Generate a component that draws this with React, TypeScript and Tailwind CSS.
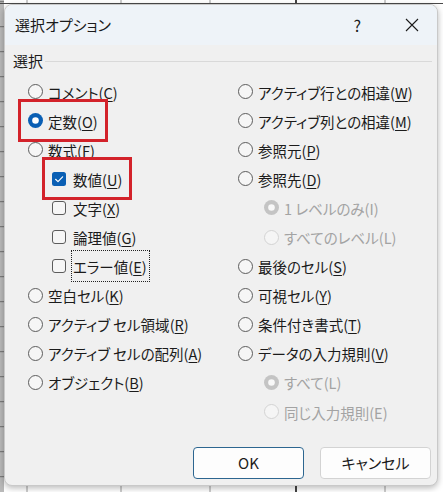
import React from "react";

const font = "font-['Noto_Sans_CJK_JP','Noto_Sans',sans-serif] [font-feature-settings:'palt']";

function Radio({ checked = false, disabled = false }: { checked?: boolean; disabled?: boolean }) {
  if (checked && !disabled) {
    return (
      <svg width="15" height="15" viewBox="0 0 15 15" className="shrink-0">
        <circle cx="7.5" cy="7.5" r="7.5" fill="#0a5fb4" />
        <circle cx="7.5" cy="7.5" r="3.3" fill="#ffffff" />
      </svg>
    );
  }
  if (checked && disabled) {
    return (
      <svg width="15" height="15" viewBox="0 0 15 15" className="shrink-0">
        <circle cx="7.5" cy="7.5" r="7.5" fill="#c4c4c4" />
        <circle cx="7.5" cy="7.5" r="3.3" fill="#f8f8f8" />
      </svg>
    );
  }
  return (
    <svg width="15" height="15" viewBox="0 0 15 15" className="shrink-0">
      <circle
        cx="7.5"
        cy="7.5"
        r="7"
        fill={disabled ? "#f5f5f5" : "#f6f6f6"}
        stroke={disabled ? "#d2d2d2" : "#5c5c5c"}
        strokeWidth="1"
      />
    </svg>
  );
}

function Check({ checked = false }: { checked?: boolean }) {
  if (checked) {
    return (
      <svg width="14" height="14" viewBox="0 0 14 14" className="shrink-0">
        <rect x="0" y="0" width="14" height="14" rx="2.5" fill="#0a5fb4" />
        <path d="M3.6 7.3 L6 9.6 L10.6 4.8" fill="none" stroke="#ffffff" strokeWidth="1.2" strokeLinecap="round" strokeLinejoin="round" />
      </svg>
    );
  }
  return (
    <svg width="14" height="14" viewBox="0 0 14 14" className="shrink-0">
      <rect x="0.5" y="0.5" width="13" height="13" rx="2.5" fill="#f6f6f6" stroke="#5c5c5c" strokeWidth="1" />
    </svg>
  );
}

function Label({ text, k, disabled }: { text: string; k: string; disabled?: boolean }) {
  return (
    <span className={`text-[14.5px] leading-none whitespace-nowrap ${disabled ? "text-[#a3a3a3]" : "text-[#1b1b1b]"}`}>
      {text}(<span className={disabled ? "" : "underline underline-offset-[2px] decoration-1"}>{k}</span>)
    </span>
  );
}

type Item = {
  kind: "radio" | "check";
  text: string;
  k: string;
  indent: number;
  checked?: boolean;
  disabled?: boolean;
  box?: boolean;
  focus?: boolean;
};

const left: Item[] = [
  { kind: "radio", text: "コメント", k: "C", indent: 0 },
  { kind: "radio", text: "定数", k: "O", indent: 0, checked: true, box: true },
  { kind: "radio", text: "数式", k: "F", indent: 0 },
  { kind: "check", text: "数値", k: "U", indent: 24, checked: true, box: true },
  { kind: "check", text: "文字", k: "X", indent: 24 },
  { kind: "check", text: "論理値", k: "G", indent: 24 },
  { kind: "check", text: "エラー値", k: "E", indent: 24, focus: true },
  { kind: "radio", text: "空白セル", k: "K", indent: 0 },
  { kind: "radio", text: "アクティブ セル領域", k: "R", indent: 0 },
  { kind: "radio", text: "アクティブ セルの配列", k: "A", indent: 0 },
  { kind: "radio", text: "オブジェクト", k: "B", indent: 0 },
];

const right: Item[] = [
  { kind: "radio", text: "アクティブ行との相違", k: "W", indent: 0 },
  { kind: "radio", text: "アクティブ列との相違", k: "M", indent: 0 },
  { kind: "radio", text: "参照元", k: "P", indent: 0 },
  { kind: "radio", text: "参照先", k: "D", indent: 0 },
  { kind: "radio", text: "1 レベルのみ", k: "I", indent: 26, checked: true, disabled: true },
  { kind: "radio", text: "すべてのレベル", k: "L", indent: 26, disabled: true },
  { kind: "radio", text: "最後のセル", k: "S", indent: 0 },
  { kind: "radio", text: "可視セル", k: "Y", indent: 0 },
  { kind: "radio", text: "条件付き書式", k: "T", indent: 0 },
  { kind: "radio", text: "データの入力規則", k: "V", indent: 0 },
  { kind: "radio", text: "すべて", k: "L", indent: 26, checked: true, disabled: true },
  { kind: "radio", text: "同じ入力規則", k: "E", indent: 26, disabled: true },
];

function Row({ item }: { item: Item }) {
  return (
    <div className="h-[29.1px] flex items-center" style={{ paddingLeft: item.indent }}>
      <div className="relative flex items-center">
        {item.box && (
          <span className="absolute left-[-10px] right-[-10px] top-[-8px] bottom-[-7px] border-[3px] border-[#d3222a]" />
        )}
        {item.kind === "radio" ? (
          <Radio checked={item.checked} disabled={item.disabled} />
        ) : (
          <Check checked={item.checked} />
        )}
        <div className={`relative ${item.kind === "radio" ? "ml-[5px]" : "ml-[7px]"} py-[2px]`}>
          {item.focus && (
            <span className="absolute left-[-2px] right-[-3px] top-[-2px] bottom-[-2px] border border-dotted border-[#222]" />
          )}
          <Label text={item.text} k={item.k} disabled={item.disabled} />
        </div>
      </div>
    </div>
  );
}

function Spreadsheet() {
  const hLines = Array.from({ length: 20 }, (_, i) => 1.7 + i * 25);
  const vLines = [27, 121, 210, 385];
  return (
    <svg className="absolute inset-0" width="443" height="492">
      <rect width="443" height="492" fill="#ffffff" />
      <rect x="0" y="0" width="4" height="492" fill="#b9b9b9" />
      {hLines.map((y) => (
        <line key={y} x1="0" y1={y} x2="4" y2={y} stroke="#6e6e6e" strokeWidth="1" />
      ))}
      {vLines.map((x) => (
        <line key={x} x1={x} y1="0" x2={x} y2="492" stroke="#9a9a9a" strokeWidth="1" />
      ))}
      <line x1="296" y1="0" x2="296" y2="492" stroke="#444" strokeWidth="2" />
      <line x1="0" y1="3.5" x2="443" y2="3.5" stroke="#4a4a4a" strokeWidth="1" />
    </svg>
  );
}

export default function App() {
  return (
    <div className={`relative w-[443px] h-[492px] overflow-hidden ${font}`}>
      <Spreadsheet />
      <div className="relative ml-[4px] mt-[4px] w-[434px] h-[482px] rounded-[8px] bg-[#f0f0f0] shadow-[0_2px_6px_rgba(0,0,0,0.28)] border border-[#c9c9c9] flex flex-col overflow-hidden">
        {/* Title bar */}
        <div className="h-[40px] shrink-0 flex items-center bg-[#eef3f8] pl-[10px]">
          <span className="text-[15px] text-[#1b1b1b]">選択オプション</span>
          <span className="ml-auto mr-[44px] text-[16px] text-[#1b1b1b]">?</span>
          <svg width="14" height="14" viewBox="0 0 14 14" className="mr-[18px]">
            <path d="M1 1 L13 13 M13 1 L1 13" stroke="#1b1b1b" strokeWidth="1.1" />
          </svg>
        </div>

        {/* Group header */}
        <div className="h-[32px] shrink-0 flex items-center pl-[8px] pr-[5px]">
          <span className="text-[15px] text-[#1b1b1b]">選択</span>
          <div className="flex-1 h-px bg-[#d9d9d9] ml-[2px]" />
        </div>

        {/* Options */}
        <div className="flex">
          <div className="w-[210px] pl-[23px] flex flex-col">
            {left.map((it, i) => (
              <Row key={i} item={it} />
            ))}
          </div>
          <div className="flex-1 pl-[23px] flex flex-col">
            {right.map((it, i) => (
              <Row key={i} item={it} />
            ))}
          </div>
        </div>

        {/* Buttons */}
        <div className="mt-auto mb-[6px] flex justify-end gap-[16px] pr-[6px]">
          <button className="w-[111px] h-[32px] rounded-[4px] bg-[#fdfdfd] border border-[#2d6690] text-[15px] text-[#1b1b1b]">
            OK
          </button>
          <button className="w-[111px] h-[32px] rounded-[4px] bg-[#fdfdfd] border border-[#d3d3d3] text-[15px] text-[#1b1b1b]">
            キャンセル
          </button>
        </div>
      </div>
    </div>
  );
}
